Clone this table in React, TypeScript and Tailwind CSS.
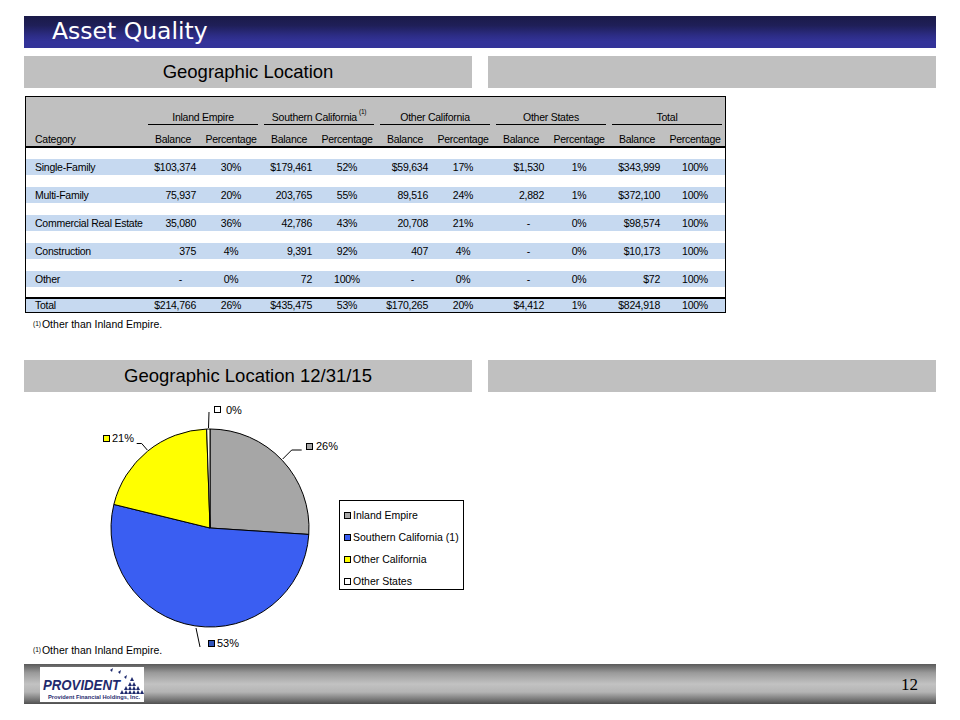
import React from "react";

const cols =
  "grid grid-cols-[119px_56px_60px_56px_60px_56px_60px_56px_60px_56px_60px]";

const rows: string[][] = [
  ["Single-Family", "$103,374", "30%", "$179,461", "52%", "$59,634", "17%", "$1,530", "1%", "$343,999", "100%"],
  ["Multi-Family", "75,937", "20%", "203,765", "55%", "89,516", "24%", "2,882", "1%", "$372,100", "100%"],
  ["Commercial Real Estate", "35,080", "36%", "42,786", "43%", "20,708", "21%", "-", "0%", "$98,574", "100%"],
  ["Construction", "375", "4%", "9,391", "92%", "407", "4%", "-", "0%", "$10,173", "100%"],
  ["Other", "-", "0%", "72", "100%", "-", "0%", "-", "0%", "$72", "100%"],
];
const total = ["Total", "$214,766", "26%", "$435,475", "53%", "$170,265", "20%", "$4,412", "1%", "$824,918", "100%"];

function Cells({ r }: { r: string[] }) {
  return (
    <>
      {r.map((c, i) => {
        if (i === 0)
          return (
            <div key={i} className="pl-[9px] flex items-center whitespace-nowrap">
              {c}
            </div>
          );
        if (i % 2 === 1)
          return (
            <div
              key={i}
              className={`flex items-center justify-end whitespace-nowrap ${c === "-" ? "pr-[19px]" : "pr-[5px]"}`}
            >
              {c}
            </div>
          );
        return (
          <div key={i} className="flex items-center justify-center">
            {c}
          </div>
        );
      })}
    </>
  );
}

function Pie() {
  return (
    <svg width="315" height="265" viewBox="0 0 315 265" className="overflow-visible shrink-0">
      <g stroke="#000" strokeWidth="1">
        <path d="M186,136 L186,37 A99,99 0 0 1 284.79,142.44 Z" fill="#a6a6a6" />
        <path d="M186,136 L284.79,142.44 A99,99 0 1 1 89.85,112.43 Z" fill="#3a5ef2" />
        <path d="M186,136 L89.85,112.43 A99,99 0 0 1 182.67,37.06 Z" fill="#ffff00" />
        <path d="M186,136 L182.67,37.06 A99,99 0 0 1 186,37 Z" fill="#ffffe8" />
      </g>
      <g stroke="#000" strokeWidth="1" fill="none">
        <polyline points="184.5,36 185,20" />
        <polyline points="258.7,67 267.7,58 277.7,58" />
        <polyline points="112.7,51.5 117.7,51.5 123.3,58" />
        <polyline points="172,236 176,255" />
      </g>
      <g stroke="#000" strokeWidth="1">
        <rect x="190.5" y="14.5" width="6" height="6" fill="#ffffff" />
        <rect x="282.5" y="51.5" width="6" height="6" fill="#a6a6a6" />
        <rect x="79.5" y="43.5" width="6" height="6" fill="#ffff00" />
        <rect x="184.5" y="248.5" width="6" height="6" fill="#3355bb" />
      </g>
      <g fontFamily="'Liberation Sans', Arial, sans-serif" fontSize="11" fill="#000">
        <text x="202" y="22">0%</text>
        <text x="292" y="58">26%</text>
        <text x="88" y="50">21%</text>
        <text x="193" y="255">53%</text>
      </g>
    </svg>
  );
}

function Logo() {
  return (
    <svg width="104" height="35" viewBox="0 0 104 35" className="shrink-0">
      <rect x="0" y="0" width="104" height="35" fill="#ffffff" />
      <text
        x="3"
        y="23"
        fontFamily="'Liberation Sans', Arial, sans-serif"
        fontWeight="900"
        fontStyle="italic"
        fontSize="14"
        fill="#1f2b6e"
        textLength="77"
        lengthAdjust="spacingAndGlyphs"
      >
        PROVIDENT
      </text>
      <g fill="#1f2b6e">
        <polygon points="80,27 82,23 84,27" />
        <polygon points="84,27 86,23 88,27" />
        <polygon points="88,27 90,23 92,27" />
        <polygon points="92,27 94,23 96,27" />
        <polygon points="96,27 98,23 100,27" />
        <polygon points="100,27 102,23 104,27" />
        <polygon points="84,23 86,19 88,23" />
        <polygon points="88,23 90,19 92,23" />
        <polygon points="92,23 94,19 96,23" />
        <polygon points="96,23 98,19 100,23" />
        <polygon points="88,19 90,15 92,19" />
        <polygon points="92,19 94,15 96,19" />
        <polygon points="90,14 92,10 94,14" />
        <polygon points="84,10 87,8 86,12" />
        <polygon points="78,5 81,3 80,7" />
        <polygon points="70,3 73,1 72,5" />
      </g>
      <text
        x="8"
        y="32"
        fontFamily="'Liberation Sans', Arial, sans-serif"
        fontWeight="700"
        fontSize="5.5"
        fill="#1f2b6e"
        textLength="92"
        lengthAdjust="spacingAndGlyphs"
      >
        Provident Financial Holdings, Inc.
      </text>
    </svg>
  );
}

export default function App() {
  const groups = ["Inland Empire", "Southern California", "Other California", "Other States", "Total"];
  return (
    <div className="w-[960px] h-[720px] bg-white pt-[16px] px-[24px] font-['Liberation_Sans',Arial,sans-serif] text-black overflow-hidden">
      {/* Title bar */}
      <div className="h-[32px] bg-[linear-gradient(to_bottom,#1a1a48_0%,#1f1f58_30%,#2c2c84_60%,#333399_80%,#333399_100%)] flex items-center pl-[28px]">
        <span className="font-['DejaVu_Sans',sans-serif] text-[23.5px] leading-none text-white">
          Asset Quality
        </span>
      </div>

      {/* Section bars */}
      <div className="mt-[8px] flex gap-[16px]">
        <div className="w-[448px] h-[32px] bg-[#c0c0c0] flex items-center justify-center text-[18.5px] leading-none">
          Geographic Location
        </div>
        <div className="w-[448px] h-[32px] bg-[#c0c0c0]" />
      </div>

      {/* Table */}
      <div className="mt-[8px] ml-[1px] w-[701px] border border-black text-[10.5px] leading-none tracking-[-0.25px]">
        <div className="bg-[#c0c0c0] h-[49px] pt-[13px]">
          <div className={`${cols} h-[15px]`}>
            <div />
            {groups.map((g) => (
              <div
                key={g}
                className="col-span-2 mx-[3px] border-b border-black flex items-center justify-center whitespace-nowrap"
              >
                {g}
                {g === "Southern California" && (
                  <span className="text-[6.5px] self-start ml-[2px] mt-[-1px]">(1)</span>
                )}
              </div>
            ))}
          </div>
          <div className={`${cols} h-[14px] mt-[7px]`}>
            <div className="pl-[9px] flex items-center">Category</div>
            {groups.map((g) => (
              <React.Fragment key={g}>
                <div className="flex items-center justify-center">Balance</div>
                <div className="flex items-center justify-center whitespace-nowrap">Percentage</div>
              </React.Fragment>
            ))}
          </div>
        </div>
        <div className="h-[2px] bg-black" />
        <div className="pt-[11px]">
          {rows.map((r, idx) => (
            <div key={r[0]} className={idx < rows.length - 1 ? "pb-[12px]" : "pb-[10px]"}>
              <div className={`${cols} h-[16px] bg-[#c6d9f0]`}>
                <Cells r={r} />
              </div>
            </div>
          ))}
        </div>
        <div className="h-[2px] bg-black" />
        <div className={`${cols} h-[13px] bg-[#c6d9f0]`}>
          <Cells r={total} />
        </div>
      </div>

      {/* Footnote */}
      <div className="mt-[5px] h-[14px] pl-[9px] flex items-center text-[10.5px]">
        <span className="text-[6.5px] self-start mt-[1px] mr-[1px]">(1)</span>
        <span>Other than Inland Empire.</span>
      </div>

      {/* Second section bars */}
      <div className="mt-[28px] flex gap-[16px]">
        <div className="w-[448px] h-[32px] bg-[#c0c0c0] flex items-center justify-center text-[18.5px] leading-none">
          Geographic Location 12/31/15
        </div>
        <div className="w-[448px] h-[32px] bg-[#c0c0c0]" />
      </div>

      {/* Chart */}
      <div className="h-[252px] flex">
        <Pie />
        <div className="mt-[108px] w-[125px] h-[90px] border border-black bg-white pt-[3px] pl-[4px] text-[10.5px] leading-none">
          {[
            ["#a6a6a6", "Inland Empire"],
            ["#3a5ef2", "Southern California (1)"],
            ["#ffff00", "Other California"],
            ["#ffffff", "Other States"],
          ].map(([c, t]) => (
            <div key={t} className="h-[22px] flex items-center gap-[2px] whitespace-nowrap">
              <span className="w-[7px] h-[7px] border border-black shrink-0" style={{ backgroundColor: c }} />
              <span>{t}</span>
            </div>
          ))}
        </div>
      </div>

      {/* Footnote 2 */}
      <div className="h-[14px] pl-[9px] flex items-center text-[10.5px]">
        <span className="text-[6.5px] self-start mt-[1px] mr-[1px]">(1)</span>
        <span>Other than Inland Empire.</span>
      </div>

      {/* Footer */}
      <div className="mt-[6px] h-[40px] bg-[linear-gradient(to_bottom,#5a5a5a_0%,#9a9a9a_22%,#c2c2c2_50%,#b4b4b4_70%,#7a7a7a_88%,#505050_100%)] flex items-center pl-[16px] pr-[18px]">
        <Logo />
        <div className="ml-auto font-['Liberation_Serif',serif] text-[17px] leading-none">12</div>
      </div>
    </div>
  );
}
